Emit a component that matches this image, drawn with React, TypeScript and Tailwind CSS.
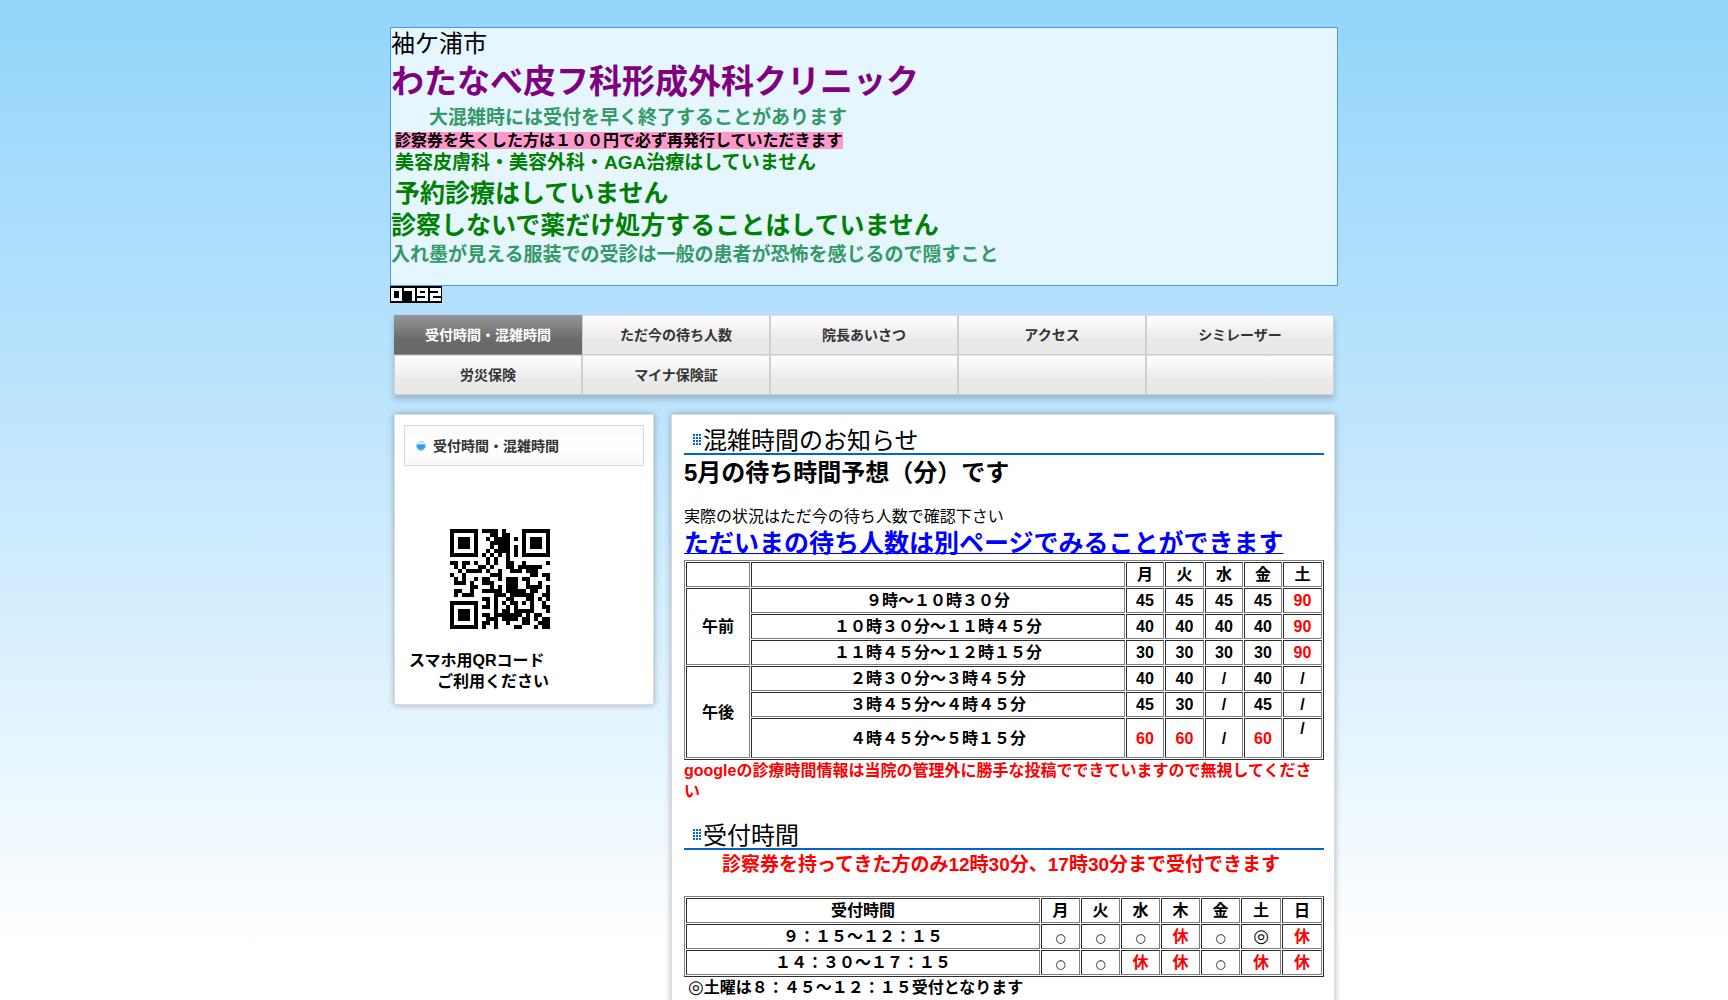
import React from 'react'

interface WaitRow {
  time: string
  values: string[]
}

const navItems = [
  '受付時間・混雑時間',
  'ただ今の待ち人数',
  '院長あいさつ',
  'アクセス',
  'シミレーザー',
  '労災保険',
  'マイナ保険証',
  '',
  '',
  '',
]

const morning: WaitRow[] = [
  { time: '９時～１０時３０分', values: ['45', '45', '45', '45', '90'] },
  { time: '１０時３０分～１１時４５分', values: ['40', '40', '40', '40', '90'] },
  { time: '１１時４５分～１２時１５分', values: ['30', '30', '30', '30', '90'] },
]

const afternoon: WaitRow[] = [
  { time: '２時３０分～３時４５分', values: ['40', '40', '/', '40', '/'] },
  { time: '３時４５分～４時４５分', values: ['45', '30', '/', '45', '/'] },
  { time: '４時４５分～５時１５分', values: ['60', '60', '/', '60', '/'] },
]

const reception = [
  { time: '９：１５〜１２：１５', values: ['○', '○', '○', '休', '○', '◎', '休'] },
  { time: '１４：３０〜１７：１５', values: ['○', '○', '休', '休', '○', '休', '休'] },
]

// 1 行 = 25 モジュール
const qrRows = [
  '#######.####.#....#######',
  '#.....#...##.##...#.....#',
  '#.###.#..#.####.#.#.###.#',
  '#.###.#...#####...#.###.#',
  '#.###.#...#.###.#.#.###.#',
  '#.....#..#.####.#.#.....#',
  '#######.#.#.#.#.#.#######',
  '.........#.#..#..........',
  '##.##.#..#.#..##..#.....#',
  '.#.#...##.#...##.######..',
  '..#.####.#..#..###.###...',
  '#..#......###.......##.##',
  '.#.#..#.##..#.###.##....#',
  '.###.#..###...###..#..#..',
  '.....##...#.#.###..####.#',
  '.##..#..#####.#####.##..#',
  '.#.###.....###.######..##',
  '........##.#..##...##.#.#',
  '#######..#.#.#.##.#.#..#.',
  '#.....#.##.#..#.#...#..##',
  '#.###.#....#.##.#####...#',
  '#.###.#.##.#######.#.##..',
  '#.###.#..###.####.##.#.##',
  '#.....#.##.#..#...##..###',
  '#######.#..#....##...#.##',
]

const cell = 'border border-[gray] [border-style:inset] p-0 text-center align-middle font-bold'
const table = 'w-full table-fixed border-separate border-spacing-px border border-[gray] [border-style:outset] leading-[21px]'

function valueColor(value: string) {
  return value === '90' || value === '60' || value === '休' ? 'text-[#ff0000]' : ''
}

function QrCode() {
  return (
    <svg className="block size-25" viewBox="0 0 25 25" shapeRendering="crispEdges" role="img" aria-label="QR">
      {qrRows.map((row, y) =>
        row.split('').map((c, x) => (c === '#' ? <rect key={`${x}-${y}`} x={x} y={y} width="1" height="1" /> : null)),
      )}
    </svg>
  )
}

function Counter() {
  return (
    <svg className="block h-[17px] w-[52px]" viewBox="0 0 52 17" shapeRendering="crispEdges" aria-hidden="true">
      <rect width="52" height="17" fill="#000" />
      <g fill="#fff">
        <path fillRule="evenodd" d="M1 2h11v13H1zM4 5v7h5V5z" />
        <path d="M14 2h11v13h-3V5h-8z" />
        <path fillRule="evenodd" d="M27 2h11v13H27v-3h8v-2h-8zM30 5v2h5V5z" />
        <path d="M40 2h11v8h-8v2h8v3H40V7h8V5h-8z" />
      </g>
    </svg>
  )
}

function DotsIcon() {
  return (
    <svg className="mb-2 block h-[11px] w-2 shrink-0" viewBox="0 0 8 11" shapeRendering="crispEdges" aria-hidden="true">
      {[0, 3, 6].map((x) =>
        [0, 3, 6, 9].map((y) => <rect key={`${x}-${y}`} x={x} y={y} width="2" height="2" fill="#0066cc" />),
      )}
    </svg>
  )
}

function BallIcon() {
  return (
    <svg className="block size-[10px] shrink-0" viewBox="0 0 10 10" aria-hidden="true">
      <defs>
        <linearGradient id="ball" x1="0" y1="0" x2="0" y2="1">
          <stop offset="0" stopColor="#c9dcb4" />
          <stop offset="0.22" stopColor="#e6f7ff" />
          <stop offset="0.32" stopColor="#5fc8ff" />
          <stop offset="0.45" stopColor="#1e9bf5" />
          <stop offset="1" stopColor="#35b4ff" />
        </linearGradient>
      </defs>
      <circle cx="5" cy="5" r="4.5" fill="url(#ball)" stroke="#b9d3bd" strokeWidth="1" />
    </svg>
  )
}

function SectionTitle({ children }: { children: React.ReactNode }) {
  return (
    <h2 className="flex items-end border-b-2 border-[#0066cc] pl-[9px] text-2xl leading-6 font-normal">
      <DotsIcon />
      <span className="pl-[2px]">{children}</span>
    </h2>
  )
}

function WaitRows({ label, rows }: { label: string; rows: WaitRow[] }) {
  return (
    <>
      {rows.map((row, i) => {
        const last = row.time.startsWith('４')
        return (
          <tr key={row.time} className={last ? 'h-10' : 'h-[25px]'}>
            {i === 0 && (
              <th rowSpan={3} className={cell}>
                {label}
              </th>
            )}
            <td className={cell}>{row.time}</td>
            {row.values.map((v, j) => (
              <td key={j} className={`${cell} ${valueColor(v)}`}>
                {last && j === 4 ? <div className="h-[38px] leading-[19px]">{v}</div> : v}
              </td>
            ))}
          </tr>
        )
      })}
    </>
  )
}

function Mark({ value }: { value: string }) {
  if (value === '○') {
    return <span className="font-['DejaVu_Sans'] text-xs font-normal">○</span>
  }
  if (value === '◎') {
    return <span className="font-['DejaVu_Sans'] text-lg leading-none">◎</span>
  }
  return <>{value}</>
}

export default function App() {
  return (
    <div className="min-h-screen bg-white bg-[linear-gradient(to_bottom,#93d5fb_0px,#bfe5fd_420px,#ffffff_950px)] bg-no-repeat font-['Liberation_Sans','Noto_Sans_CJK_JP',sans-serif] text-base text-black">
      <div className="mx-auto w-full max-w-[948px] pt-[27px]">
        {/* ヘッダー */}
        <header className="border border-[#4499ee] bg-[#e5f6ff] pb-4 font-bold">
          <p className="text-2xl leading-8 font-normal">袖ケ浦市</p>
          <h1 className="text-[33px] leading-[44px] text-[#800080]">わたなべ皮フ科形成外科クリニック</h1>
          <p className="pl-[38px] text-[19px] leading-7 text-[#339966]">大混雑時には受付を早く終了することがあります</p>
          <p className="pl-1 leading-[17px]">
            <span className="inline-block bg-[#ff99cc] leading-[17px]">診察券を失くした方は１００円で必ず再発行していただきます</span>
          </p>
          <p className="pl-1 text-[19px] leading-7 text-[#008000]">美容皮膚科・美容外科・AGA治療はしていません</p>
          <p className="pl-1 text-[25px] leading-8 text-[#008000]">予約診療はしていません</p>
          <p className="text-[25px] leading-8 text-[#008000]">診察しないで薬だけ処方することはしていません</p>
          <p className="text-[19px] leading-7 text-[#339966]">入れ墨が見える服装での受診は一般の患者が恐怖を感じるので隠すこと</p>
        </header>
        <Counter />

        <div className="px-1">
          {/* グローバルメニュー */}
          <nav className="mt-3 shadow-[0_4px_6px_rgba(0,0,0,0.2)]">
            <ul className="grid grid-cols-5">
              {navItems.map((item, i) => (
                <li key={i} className="h-10">
                  {i === 0 ? (
                    <a
                      href="#reception"
                      className="flex h-full items-center justify-center border-y border-t-[#959595] border-b-[#8c8c8c] bg-linear-to-b from-[#959595] to-[#696969] to-65% text-sm font-bold text-white"
                    >
                      {item}
                    </a>
                  ) : (
                    <a
                      href="#page"
                      className="flex h-full items-center justify-center border border-[#cfcfcf] border-t-[#dedede] bg-linear-to-b from-white to-[#e9e9e9] to-65% text-sm font-bold text-[#333333]"
                    >
                      {item}
                    </a>
                  )}
                </li>
              ))}
            </ul>
          </nav>

          <div className="-mr-px mt-[19px] flex items-start gap-[17px]">
            {/* サイドバー */}
            <aside className="w-[260px] shrink-0 border border-[#dddddd] bg-white px-[9px] pt-[10px] pb-3 font-bold shadow-[0_0_6px_rgba(0,0,0,0.3)]">
              <a
                href="#reception"
                className="flex h-[41px] items-center gap-[7px] border border-[#dddddd] bg-linear-to-b from-[#fafafa] via-white to-[#f9f9f9] pl-[11px] text-sm text-[#333333]"
              >
                <BallIcon />
                受付時間・混雑時間
              </a>
              <div className="mt-[63px] pl-[46px]">
                <QrCode />
              </div>
              <p className="mt-[21px] pl-[5px] leading-[21px]">スマホ用QRコード</p>
              <p className="pl-[33px] leading-[21px]">ご利用ください</p>
            </aside>

            {/* 本文 */}
            <main
              id="reception"
              className="min-w-0 flex-1 border border-[#dddddd] bg-white pt-[14px] pr-[10px] pb-10 pl-3 shadow-[0_0_6px_rgba(0,0,0,0.3)]"
            >
              <SectionTitle>混雑時間のお知らせ</SectionTitle>
              <p className="text-2xl leading-9 font-bold">5月の待ち時間予想（分）です</p>
              <p className="mt-[15px] leading-[21px]">実際の状況はただ今の待ち人数で確認下さい</p>
              <p className="text-[25px] leading-[33px] font-bold">
                <a href="#waiting" className="text-[#0000ff] underline decoration-1">
                  ただいまの待ち人数は別ページでみることができます
                </a>
              </p>
              <table className={table}>
                <colgroup>
                  <col className="w-16" />
                  <col />
                  <col className="w-[38px]" />
                  <col className="w-[39px]" />
                  <col className="w-[38px]" span={2} />
                  <col className="w-[39px]" />
                </colgroup>
                <tbody>
                  <tr className="h-[25px]">
                    <td className={cell}></td>
                    <td className={cell}></td>
                    {['月', '火', '水', '金', '土'].map((d) => (
                      <th key={d} className={cell}>
                        {d}
                      </th>
                    ))}
                  </tr>
                  <WaitRows label="午前" rows={morning} />
                  <WaitRows label="午後" rows={afternoon} />
                </tbody>
              </table>
              <p className="leading-[21px] font-bold text-[#ff0000]">
                googleの診療時間情報は当院の管理外に勝手な投稿でできていますので無視してください
              </p>

              <div className="mt-[22px]">
                <SectionTitle>受付時間</SectionTitle>
                <p className="pl-[38px] text-[19px] leading-[30px] font-bold text-[#ff0000]">
                  診察券を持ってきた方のみ12時30分、17時30分まで受付できます
                </p>
                <table className={`${table} mt-4`}>
                  <colgroup>
                    <col />
                    <col className="w-[39px]" span={5} />
                    <col className="w-10" span={2} />
                  </colgroup>
                  <tbody>
                    <tr className="h-[25px]">
                      <th className={cell}>受付時間</th>
                      {['月', '火', '水', '木', '金', '土', '日'].map((d) => (
                        <th key={d} className={cell}>
                          {d}
                        </th>
                      ))}
                    </tr>
                    {reception.map((row) => (
                      <tr key={row.time} className="h-[25px]">
                        <td className={cell}>{row.time}</td>
                        {row.values.map((v, i) => (
                          <td key={i} className={`${cell} ${valueColor(v)}`}>
                            <Mark value={v} />
                          </td>
                        ))}
                      </tr>
                    ))}
                  </tbody>
                </table>
                <p className="pl-1 leading-[21px] font-bold">
                  <Mark value="◎" />
                  土曜は８：４５〜１２：１５受付となります
                </p>
              </div>
            </main>
          </div>
        </div>
      </div>
    </div>
  )
}
